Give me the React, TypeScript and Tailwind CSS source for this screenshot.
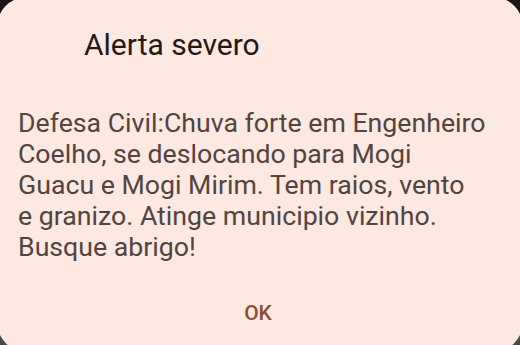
const App = () => {
  return (
    <div className="h-[345px] w-[520px] overflow-hidden bg-gradient-to-b from-[#1b1614] from-40% to-[#4a4a4a] to-60%">
      <div
        className="-mx-[3px] -mt-[3px] flex h-[355px] flex-col rounded-[30px] bg-[#fde8e2] text-[#52443f]"
        style={{ fontFamily: "Roboto, 'Liberation Sans', sans-serif" }}
      >
        <h2 className="mt-[30px] pl-[87px] text-[30px] leading-[36px] text-[#231a17]">
          Alerta severo
        </h2>
        <p className="mt-[45px] pl-[21px] text-[26.7px] leading-[31px]">
          Defesa Civil:Chuva forte em Engenheiro
          <br />
          Coelho, se deslocando para Mogi
          <br />
          Guacu e Mogi Mirim. Tem raios, vento
          <br />
          e granizo. Atinge municipio vizinho.
          <br />
          Busque abrigo!
        </p>
        <div className="mt-[34px] flex justify-center pr-[4px]">
          <button className="px-3 py-1 text-[21px] font-medium leading-[24px] text-[#8d4e35]">
            OK
          </button>
        </div>
      </div>
    </div>
  );
};

export default App;
